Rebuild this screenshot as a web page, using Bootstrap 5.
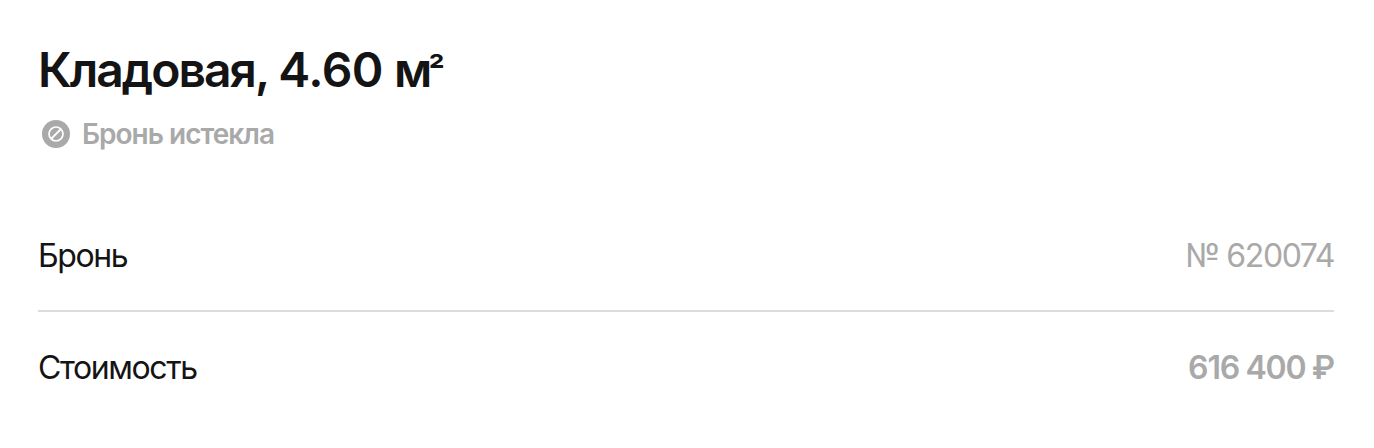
<!DOCTYPE html>
<html lang="ru">

<head>
    <meta charset="UTF-8">
    <meta name="viewport" content="width=device-width, initial-scale=1.0">
    <title>Кладовая</title>
    <link href="https://cdn.jsdelivr.net/npm/bootstrap@5.3.3/dist/css/bootstrap.min.css" rel="stylesheet">
    <script src="https://cdn.jsdelivr.net/npm/bootstrap@5.3.3/dist/js/bootstrap.bundle.min.js"></script>

    <style>
        body {
            font-family: Inter, "Liberation Sans", sans-serif;
            color: #141414;
            background-color: #fff;
        }

        .booking {
            padding: 40px 40px 0 38px;
        }

        .booking-title {
            height: 60px;
            font-size: 48px;
            line-height: 60px;
            font-weight: 600;
            letter-spacing: -2px;
        }

        .booking-area {
            margin-left: 1px;
            letter-spacing: -0.5px;
        }

        .booking-unit {
            margin-left: 1px;
            letter-spacing: -4px;
        }

        .booking-power {
            font-size: 36px;
            line-height: 1;
            vertical-align: 3px;
            letter-spacing: 0;
        }

        .booking-status {
            height: 36px;
            margin-top: 16px;
            padding-left: 4px;
            gap: 12px;
            font-size: 28px;
            line-height: 36px;
            font-weight: 600;
            letter-spacing: -1px;
        }

        .booking-rows {
            margin-top: 48px;
        }

        .booking-row {
            height: 110px;
            padding-top: 2px;
            font-size: 32px;
            line-height: 40px;
        }

        .booking-row + .booking-row {
            height: 112px;
            border-top: 2px solid #dcdcdc;
        }

        .booking-label {
            font-weight: 400;
            letter-spacing: -1.4px;
        }

        .booking-number {
            font-weight: 400;
            letter-spacing: -1.4px;
        }

        .booking-price {
            font-weight: 600;
            letter-spacing: -1.1px;
            word-spacing: -0.8px;
        }

        .text-muted-gray {
            color: #a9a9a9;
        }
    </style>
</head>

<body>

    <main class="booking">
        <h1 class="booking-title mb-0">Кладовая, <span class="booking-area">4.60</span> <span class="booking-unit">м</span><span class="booking-power">²</span></h1>
        <div class="booking-status d-flex align-items-center text-muted-gray">
            <svg width="28" height="28" viewBox="0 0 28 28" fill="none" aria-hidden="true">
                <circle cx="14" cy="14" r="14" fill="#a9a9a9" />
                <circle cx="14" cy="14" r="7" stroke="#fff" stroke-width="1.7" />
                <path d="M9.5 18.5l9-9" stroke="#fff" stroke-width="1.8" />
            </svg>
            <span>Бронь истекла</span>
        </div>

        <div class="booking-rows">
            <div class="booking-row d-flex align-items-center justify-content-between">
                <span class="booking-label">Бронь</span>
                <span class="booking-number text-muted-gray">№ 620074</span>
            </div>
            <div class="booking-row d-flex align-items-center justify-content-between">
                <span class="booking-label">Стоимость</span>
                <span class="booking-price text-muted-gray">616 400 ₽</span>
            </div>
        </div>
    </main>

</body>

</html>
